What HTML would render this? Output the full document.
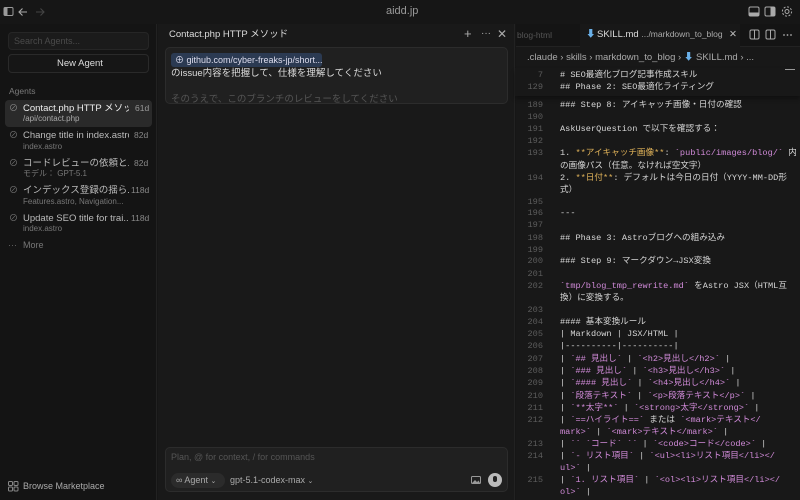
<!DOCTYPE html>
<html><head><meta charset="utf-8"><style>
*{margin:0;padding:0;box-sizing:border-box}
body{width:800px;height:500px;overflow:hidden;background:#161616;font-family:"Liberation Sans","Noto Sans CJK JP",sans-serif;color:#d4d4d4;position:relative}
.a{position:absolute;white-space:nowrap;line-height:1.2}
.t{overflow:hidden;text-overflow:clip}
.ln{position:absolute;left:515px;width:28px;text-align:right;color:#5c5c5c;font-family:"Liberation Mono",monospace;font-size:8.6px;line-height:12px}
.cd{position:absolute;left:560px;color:#d6d6d6;font-family:"Liberation Mono","Noto Sans CJK JP",monospace;font-size:8.6px;line-height:12px;white-space:nowrap}
.y{color:#e2b45a}.p{color:#d08ad8}.d{color:#8a8a8a}
</style></head><body>
<div class="a" style="left:0;top:0;width:800px;height:24px;background:#161616"></div>
<svg class="a" style="left:3px;top:6px" width="44" height="12" viewBox="0 0 44 12"><rect x="1" y="1.5" width="9" height="8" rx="1.2" fill="none" stroke="#9a9a9a"/><rect x="1.5" y="2" width="3" height="7" fill="#9a9a9a"/><path d="M24 6H16M19.5 2.5L16 6l3.5 3.5" fill="none" stroke="#aaa" stroke-width="1.1"/><path d="M33 6h8M37.5 2.5L41 6l-3.5 3.5" fill="none" stroke="#444" stroke-width="1.1"/></svg>
<div class="a" style="left:386px;top:5px;font-size:11px;color:#999">aidd.jp</div>
<svg class="a" style="left:748px;top:5px" width="48" height="14" viewBox="0 0 48 14"><rect x="1" y="2" width="10" height="9" rx="1.5" fill="none" stroke="#aaa"/><rect x="1" y="7.5" width="10" height="3.5" fill="#aaa"/><rect x="17" y="2" width="10" height="9" rx="1.5" fill="none" stroke="#aaa"/><rect x="22.5" y="2" width="4.5" height="9" fill="#aaa"/><circle cx="39" cy="6.5" r="2" fill="none" stroke="#aaa"/><circle cx="39" cy="6.5" r="4.6" fill="none" stroke="#aaa" stroke-dasharray="2 1.6"/></svg>
<!-- sidebar -->
<div class="a" style="left:0;top:24px;width:157px;height:476px;background:#141414;border-right:1px solid #222"></div>
<div class="a" style="left:8px;top:32px;width:141px;height:18px;background:#1b1b1b;border:1px solid #262626;border-radius:4px"></div>
<div class="a" style="left:14px;top:36px;font-size:9px;color:#4a4a4a">Search Agents...</div>
<div class="a" style="left:8px;top:54px;width:141px;height:19px;border:1px solid #2a2a2a;border-radius:4px;background:#161616"></div>
<div class="a" style="left:57px;top:58px;font-size:9.5px;color:#ddd">New Agent</div>
<div class="a" style="left:9px;top:86px;font-size:8.5px;color:#7a7a7a">Agents</div>
<div class="a" style="left:5px;top:100px;width:147px;height:27px;background:#2a2a2a;border-radius:4px"></div>

<div class="a" style="left:9px;top:103px;font-size:9px;color:#888">⊘</div>
<div class="a t" style="left:23px;top:103px;width:106px;font-size:9.5px;color:#eee">Contact.php HTTP メソッ...</div>
<div class="a" style="left:135px;top:103px;font-size:8.5px;color:#999">61d</div>
<div class="a" style="left:23px;top:114px;font-size:8px;color:#aaa">/api/contact.php</div>

<div class="a" style="left:9px;top:130px;font-size:9px;color:#777">⊘</div>
<div class="a t" style="left:23px;top:130px;width:106px;font-size:9.5px;color:#bbb">Change title in index.astro</div>
<div class="a" style="left:134px;top:130px;font-size:8.5px;color:#888">82d</div>
<div class="a" style="left:23px;top:142px;font-size:8px;color:#777">index.astro</div>

<div class="a" style="left:9px;top:158px;font-size:9px;color:#777">⊘</div>
<div class="a t" style="left:23px;top:158px;width:106px;font-size:9.5px;color:#bbb">コードレビューの依頼と...</div>
<div class="a" style="left:134px;top:158px;font-size:8.5px;color:#888">82d</div>
<div class="a" style="left:23px;top:169px;font-size:8px;color:#777">モデル： GPT-5.1</div>

<div class="a" style="left:9px;top:185px;font-size:9px;color:#777">⊘</div>
<div class="a t" style="left:23px;top:185px;width:106px;font-size:9.5px;color:#bbb">インデックス登録の揺ら...</div>
<div class="a" style="left:131px;top:185px;font-size:8.5px;color:#888">118d</div>
<div class="a t" style="left:23px;top:197px;width:100px;font-size:8px;color:#777">Features.astro, Navigation...</div>

<div class="a" style="left:9px;top:213px;font-size:9px;color:#777">⊘</div>
<div class="a t" style="left:23px;top:213px;width:106px;font-size:9.5px;color:#bbb">Update SEO title for trai...</div>
<div class="a" style="left:131px;top:213px;font-size:8.5px;color:#888">118d</div>
<div class="a" style="left:23px;top:224px;font-size:8px;color:#777">index.astro</div>
<div class="a" style="left:8px;top:240px;font-size:9px;color:#666">···</div>
<div class="a" style="left:23px;top:240px;font-size:9px;color:#777">More</div>
<svg class="a" style="left:8px;top:481px" width="11" height="11" viewBox="0 0 11 11"><rect x="0.5" y="0.5" width="4" height="4" rx="1" fill="none" stroke="#888"/><rect x="6" y="0.5" width="4" height="4" rx="1" fill="none" stroke="#888"/><rect x="0.5" y="6" width="4" height="4" rx="1" fill="none" stroke="#888"/><rect x="6" y="6" width="4" height="4" rx="1" fill="none" stroke="#888"/></svg>
<div class="a" style="left:23px;top:481px;font-size:9px;color:#aaa">Browse Marketplace</div>
<!-- center -->
<div class="a" style="left:158px;top:24px;width:357px;height:476px;background:#191919;border-right:1px solid #222"></div>
<div class="a" style="left:169px;top:29px;font-size:9.5px;color:#ddd">Contact.php HTTP メソッド</div>
<div class="a" style="left:464px;top:26px;font-size:13px;color:#aaa">+</div>
<div class="a" style="left:481px;top:28px;font-size:10px;color:#aaa">···</div>
<div class="a" style="left:497px;top:27px;font-size:12px;color:#aaa">✕</div>
<div class="a" style="left:165px;top:47px;width:343px;height:57px;background:#202020;border:1px solid #2c2c2c;border-radius:5px;overflow:hidden">
 <div class="a" style="left:5px;top:5px;height:14px;width:151px;background:#2b3a52;border-radius:3px"></div>
 <div class="a" style="left:9px;top:7px;font-size:9px;color:#dde">⊕ github.com/cyber-freaks-jp/short...</div>
 <div class="a" style="left:5px;top:20px;font-size:9.5px;color:#ddd">のissue内容を把握して、仕様を理解してください</div>
 <div class="a" style="left:5px;top:46px;font-size:9.5px;color:#555">そのうえで、このブランチのレビューをしてください</div>
</div>
<div class="a" style="left:165px;top:447px;width:343px;height:45px;background:#202020;border:1px solid #2c2c2c;border-radius:5px"></div>
<div class="a" style="left:171px;top:452px;font-size:9px;color:#555">Plan, @ for context, / for commands</div>
<div class="a" style="left:171px;top:473px;width:54px;height:15px;background:#2b2b2b;border-radius:8px"></div>
<div class="a" style="left:176px;top:475px;font-size:9px;color:#aaa">∞ Agent <span style="font-size:7px">⌄</span></div>
<div class="a" style="left:230px;top:475px;font-size:9px;color:#aaa">gpt-5.1-codex-max <span style="font-size:7px">⌄</span></div>
<svg class="a" style="left:471px;top:476px" width="10" height="9" viewBox="0 0 10 9"><rect x="0.5" y="0.5" width="9" height="7" rx="1" fill="none" stroke="#999"/><path d="M1 7l3-3 2 2 1.5-1.5L9 7z" fill="#999"/></svg>
<div class="a" style="left:488px;top:473px;width:14px;height:14px;border-radius:50%;background:#bbb"></div>
<div class="a" style="left:493px;top:476px;width:4px;height:6px;border-radius:2px;background:#222"></div>
<!-- editor -->
<div class="a" style="left:516px;top:24px;width:284px;height:476px;background:#181818"></div>
<div class="a" style="left:516px;top:24px;width:284px;height:23px;background:#141414;border-bottom:1px solid #222"></div>
<div class="a" style="left:517px;top:30px;font-size:8.5px;color:#555">blog-html</div>
<div class="a" style="left:580px;top:24px;width:160px;height:23px;background:#181818"></div>
<div class="a" style="left:586px;top:29px;font-size:9.5px;color:#6ab0e8">⬇</div>
<div class="a" style="left:597px;top:29px;font-size:9.5px;color:#ddd">SKILL.md <span style="font-size:8.5px;color:#aaa">.../markdown_to_blog</span></div>
<div class="a" style="left:729px;top:29px;font-size:9.5px;color:#bbb">✕</div>
<svg class="a" style="left:749px;top:29px" width="46" height="12" viewBox="0 0 46 12"><rect x="1" y="1" width="9" height="9" rx="1.5" fill="none" stroke="#aaa"/><path d="M5.5 1v9" stroke="#aaa"/><rect x="17" y="1" width="9" height="9" rx="1.5" fill="none" stroke="#aaa"/><path d="M21.5 1v9" stroke="#aaa"/><circle cx="35" cy="6" r=".9" fill="#aaa"/><circle cx="38.5" cy="6" r=".9" fill="#aaa"/><circle cx="42" cy="6" r=".9" fill="#aaa"/></svg>
<div class="a" style="left:527px;top:52px;font-size:9.5px;color:#aaa">.claude › skills › markdown_to_blog › <span style="color:#6ab0e8">⬇</span> SKILL.md › ...</div>
<div class="a" style="left:515px;top:68px;width:285px;height:28px;background:#181818;box-shadow:0 3px 4px rgba(0,0,0,.35)"></div>
<div class="a" style="left:785px;top:69px;width:10px;height:1px;background:#999"></div>
<div class="ln" style="top:69px">7</div><div class="cd" style="top:69px"># SEO最適化ブログ記事作成スキル</div>
<div class="ln" style="top:81px">129</div><div class="cd" style="top:81px">## Phase 2: SEO最適化ライティング</div>
<div class="ln" style="top:99px">189</div><div class="cd" style="top:99px">### Step 8: アイキャッチ画像・日付の確認</div>
<div class="ln" style="top:111px">190</div>
<div class="ln" style="top:123px">191</div><div class="cd" style="top:123px">AskUserQuestion で以下を確認する：</div>
<div class="ln" style="top:135px">192</div>
<div class="ln" style="top:147px">193</div><div class="cd" style="top:147px">1. <span class="y">**アイキャッチ画像**</span>: <span class="p">`public/images/blog/`</span> 内</div>
<div class="cd" style="top:160px">の画像パス（任意。なければ空文字）</div>
<div class="ln" style="top:172px">194</div><div class="cd" style="top:172px">2. <span class="y">**日付**</span>: デフォルトは今日の日付（YYYY-MM-DD形</div>
<div class="cd" style="top:184px">式）</div>
<div class="ln" style="top:196px">195</div>
<div class="ln" style="top:207px">196</div><div class="cd" style="top:207px">---</div>
<div class="ln" style="top:219px">197</div>
<div class="ln" style="top:232px">198</div><div class="cd" style="top:232px">## Phase 3: Astroブログへの組み込み</div>
<div class="ln" style="top:244px">199</div>
<div class="ln" style="top:255px">200</div><div class="cd" style="top:255px">### Step 9: マークダウン→JSX変換</div>
<div class="ln" style="top:268px">201</div>
<div class="ln" style="top:280px">202</div><div class="cd" style="top:280px"><span class="p">`tmp/blog_tmp_rewrite.md`</span> をAstro JSX（HTML互</div>
<div class="cd" style="top:292px">換）に変換する。</div>
<div class="ln" style="top:304px">203</div>
<div class="ln" style="top:316px">204</div><div class="cd" style="top:316px">#### 基本変換ルール</div>
<div class="ln" style="top:328px">205</div><div class="cd" style="top:328px">| Markdown | JSX/HTML |</div>
<div class="ln" style="top:340px">206</div><div class="cd" style="top:340px">|----------|----------|</div>
<div class="ln" style="top:353px">207</div><div class="cd" style="top:353px">| <span class="p">`## 見出し`</span> | <span class="p">`&lt;h2&gt;見出し&lt;/h2&gt;`</span> |</div>
<div class="ln" style="top:365px">208</div><div class="cd" style="top:365px">| <span class="p">`### 見出し`</span> | <span class="p">`&lt;h3&gt;見出し&lt;/h3&gt;`</span> |</div>
<div class="ln" style="top:377px">209</div><div class="cd" style="top:377px">| <span class="p">`#### 見出し`</span> | <span class="p">`&lt;h4&gt;見出し&lt;/h4&gt;`</span> |</div>
<div class="ln" style="top:390px">210</div><div class="cd" style="top:390px">| <span class="p">`段落テキスト`</span> | <span class="p">`&lt;p&gt;段落テキスト&lt;/p&gt;`</span> |</div>
<div class="ln" style="top:402px">211</div><div class="cd" style="top:402px">| <span class="p">`**太字**`</span> | <span class="p">`&lt;strong&gt;太字&lt;/strong&gt;`</span> |</div>
<div class="ln" style="top:414px">212</div><div class="cd" style="top:414px">| <span class="p">`==ハイライト==`</span> または <span class="p">`&lt;mark&gt;テキスト&lt;/</span></div>
<div class="cd" style="top:426px"><span class="p">mark&gt;`</span> | <span class="p">`&lt;mark&gt;テキスト&lt;/mark&gt;`</span> |</div>
<div class="ln" style="top:438px">213</div><div class="cd" style="top:438px">| <span class="p">`` `コード` ``</span> | <span class="p">`&lt;code&gt;コード&lt;/code&gt;`</span> |</div>
<div class="ln" style="top:450px">214</div><div class="cd" style="top:450px">| <span class="p">`- リスト項目`</span> | <span class="p">`&lt;ul&gt;&lt;li&gt;リスト項目&lt;/li&gt;&lt;/</span></div>
<div class="cd" style="top:462px"><span class="p">ul&gt;`</span> |</div>
<div class="ln" style="top:474px">215</div><div class="cd" style="top:474px">| <span class="p">`1. リスト項目`</span> | <span class="p">`&lt;ol&gt;&lt;li&gt;リスト項目&lt;/li&gt;&lt;/</span></div>
<div class="cd" style="top:486px"><span class="p">ol&gt;`</span> |</div>
</body></html>
